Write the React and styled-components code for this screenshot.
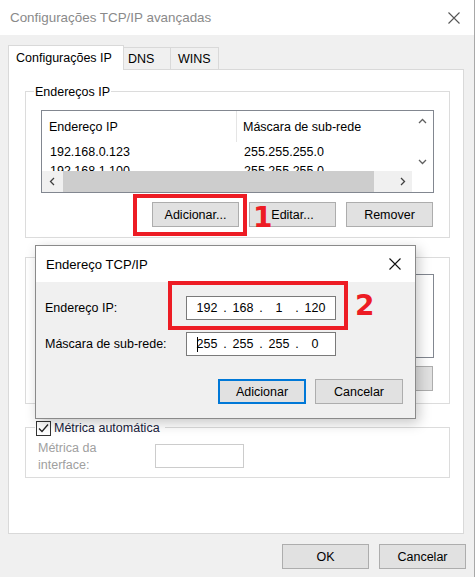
import React from "react";
import styled, { createGlobalStyle } from "styled-components";

const RED = "#ed1c24";

const GlobalStyle = createGlobalStyle`
  html, body {
    margin: 0;
    padding: 0;
    background: #fff;
  }
  body {
    font-family: "Liberation Sans", Arial, sans-serif;
    font-size: 12.5px;
    color: #000;
  }
  * {
    box-sizing: border-box;
  }
`;

const CloseIcon = ({ color }) => (
  <svg width="12" height="12" viewBox="0 0 12 12">
    <path d="M0.5 0.5L11.5 11.5M11.5 0.5L0.5 11.5" stroke={color} strokeWidth="1.1" fill="none" />
  </svg>
);

const Chevron = ({ dir, color = "#404040" }) => {
  const d = {
    up: "M1 6L4.5 2.5L8 6",
    down: "M1 3L4.5 6.5L8 3",
    left: "M6 1L2.5 4.5L6 8",
    right: "M3 1L6.5 4.5L3 8",
  }[dir];
  return (
    <svg width="9" height="9" viewBox="0 0 9 9">
      <path d={d} stroke={color} strokeWidth="1.3" fill="none" />
    </svg>
  );
};

const CheckIcon = () => (
  <svg width="13" height="13" viewBox="0 0 13 13">
    <path d="M2 6.5L5 9.5L11 2.5" stroke="#222" strokeWidth="1.3" fill="none" />
  </svg>
);

const Window = styled.div`
  position: relative;
  width: 475px;
  height: 577px;
  background: #f0f0f0;
  border-right: 1px solid #a8a8a8;
  display: flex;
  flex-direction: column;
`;

const TitleBar = styled.div`
  flex: none;
  height: ${(p) => p.$h}px;
  background: #fff;
  display: flex;
  align-items: center;
  justify-content: space-between;
  padding: 0 14px 0 10px;
  font-size: ${(p) => p.$size}px;
  color: ${(p) => (p.$active ? "#000" : "#8a8a8a")};
`;

const Body = styled.div`
  flex: 1;
  display: flex;
  flex-direction: column;
  padding: 10px 8px 0 8px;
`;

const TabRow = styled.div`
  display: flex;
  align-items: flex-end;
  height: 24px;
  position: relative;
  z-index: 1;
`;

const Tab = styled.div`
  width: ${(p) => p.$w}px;
  height: ${(p) => (p.$active ? 25 : 22)}px;
  margin-bottom: ${(p) => (p.$active ? -1 : 0)}px;
  margin-left: ${(p) => (p.$first ? 0 : -1)}px;
  padding-left: ${(p) => p.$pad}px;
  display: flex;
  align-items: center;
  border: 1px solid #d9d9d9;
  border-bottom: none;
  background: ${(p) => (p.$active ? "#fff" : "#f0f0f0")};
`;

const Panel = styled.div`
  flex: none;
  width: 456px;
  height: 465px;
  background: #fff;
  border: 1px solid #d9d9d9;
  padding: 0 13px 0 16px;
  display: flex;
  flex-direction: column;
`;

const Group = styled.div`
  display: flex;
  flex-direction: column;
  border: 1px solid #dcdcdc;
  margin-top: ${(p) => p.$top}px;
  padding-bottom: ${(p) => p.$bottom}px;
`;

const GroupTitle = styled.div`
  align-self: flex-start;
  display: flex;
  align-items: center;
  gap: 3px;
  height: 16px;
  line-height: 16px;
  margin: -8px 0 0 ${(p) => p.$left ?? 8}px;
  padding: 0 ${(p) => p.$padRight ?? 1}px 0 1px;
  background: #fff;
`;

const CheckBox = styled.span`
  width: 15px;
  height: 15px;
  border: 1px solid #333;
  background: #fff;
  display: flex;
  align-items: center;
  justify-content: center;
`;

const CheckLabel = styled.span`
  color: #18223c;
`;

const ListView = styled.div`
  margin: ${(p) => p.$top}px 15px 0;
  height: ${(p) => p.$h}px;
  border: 1px solid #828790;
  background: #fff;
  display: grid;
  grid-template-columns: 1fr 21px;
  grid-template-rows: 1fr 21px;
  overflow: hidden;
`;

const ListContent = styled.div`
  overflow: hidden;
`;

const ListRow = styled.div`
  display: grid;
  grid-template-columns: 195px 1fr;
  height: ${(p) => p.$h}px;
  align-items: center;
  white-space: nowrap;
`;

const HeaderCell = styled.div`
  height: 100%;
  display: flex;
  align-items: center;
  padding-left: ${(p) => p.$pad}px;
  border-right: ${(p) => (p.$sep ? "1px solid #e5e5e5" : "none")};
`;

const Cell = styled.div`
  padding-left: ${(p) => p.$pad}px;
`;

const VScroll = styled.div`
  background: #fff;
  display: flex;
  flex-direction: column;
  justify-content: space-between;
`;

const ScrollArrow = styled.div`
  flex: none;
  width: ${(p) => p.$w ?? 21}px;
  height: 20px;
  display: flex;
  align-items: center;
  justify-content: center;
`;

const HScroll = styled.div`
  background: #f0f0f0;
  display: flex;
  align-items: stretch;
`;

const Thumb = styled.div`
  width: ${(p) => p.$w}px;
  margin-left: 1px;
  background: #cdcdcd;
`;

const Track = styled.div`
  flex: 1;
`;

const Corner = styled.div`
  background: #fff;
`;

const PlainList = styled.div`
  margin: ${(p) => p.$top}px 15px 0;
  height: ${(p) => p.$h}px;
  border: 1px solid #828790;
  background: #fff;
`;

const ButtonRow = styled.div`
  display: flex;
  justify-content: flex-end;
  gap: ${(p) => p.$gap ?? 10}px;
  margin-top: ${(p) => p.$top}px;
  padding-right: ${(p) => p.$right ?? 0}px;
`;

const Button = styled.button`
  width: ${(p) => p.$w ?? 87}px;
  height: 25px;
  padding: 0;
  background: #e1e1e1;
  border: 1px solid ${(p) => (p.$default ? "#0078d7" : "#adadad")};
  box-shadow: ${(p) => (p.$default ? "inset 0 0 0 1px #0078d7" : "none")};
  font: inherit;
  color: #000;
`;

const MetricRow = styled.div`
  display: flex;
  margin: 4px 0 0 12px;
`;

const MetricLabel = styled.div`
  width: 117px;
  line-height: 17px;
  color: #a0a0a0;
`;

const MetricInput = styled.div`
  width: 89px;
  height: 24px;
  margin-top: 4px;
  border: 1px solid #cccccc;
  background: #fff;
`;

const Dialog = styled.div`
  position: absolute;
  left: 35px;
  top: 245px;
  width: 381px;
  height: 174px;
  border: 1px solid #8a8a8a;
  background: #f0f0f0;
  box-shadow: 3px 4px 12px rgba(0, 0, 0, 0.22);
  display: flex;
  flex-direction: column;
  z-index: 2;
`;

const DialogBody = styled.div`
  display: flex;
  flex-direction: column;
  padding: 14px 12px 14px 9px;
`;

const FieldRow = styled.div`
  display: flex;
  align-items: center;
  height: 24px;
  margin-top: ${(p) => p.$top ?? 0}px;
`;

const FieldLabel = styled.div`
  width: 141px;
`;

const IpInput = styled.div`
  width: 150px;
  height: 24px;
  border: 1px solid #7a7a7a;
  background: #fff;
  display: flex;
  align-items: center;
  padding-left: 7px;
`;

const Octet = styled.span`
  width: 26px;
  display: flex;
  justify-content: center;
  align-items: center;
`;

const Dot = styled.span`
  width: 10px;
  text-align: center;
`;

const Caret = styled.span`
  display: inline-block;
  width: 1px;
  height: 15px;
  background: #000;
  margin-right: -1px;
`;

const Marker = styled.div`
  position: absolute;
  left: ${(p) => p.$x}px;
  top: ${(p) => p.$y}px;
  width: ${(p) => p.$w}px;
  height: ${(p) => p.$h}px;
  border: 4px solid ${RED};
  z-index: 3;
`;

const Num = styled.div`
  position: absolute;
  left: ${(p) => p.$x}px;
  top: ${(p) => p.$y}px;
  font-family: "DejaVu Sans", sans-serif;
  font-weight: bold;
  font-size: 28px;
  line-height: 28px;
  color: ${RED};
  z-index: 3;
`;

const IpField = ({ parts, caret }) => (
  <IpInput>
    {parts.map((part, i) => (
      <React.Fragment key={i}>
        {i > 0 && <Dot>.</Dot>}
        <Octet>
          {caret && i === 0 && <Caret />}
          {part}
        </Octet>
      </React.Fragment>
    ))}
  </IpInput>
);

export default function App() {
  return (
    <>
      <GlobalStyle />
      <Window>
        <TitleBar $h={35} $size={13.4}>
          <span>Configurações TCP/IP avançadas</span>
          <CloseIcon color="#555" />
        </TitleBar>
        <Body>
          <TabRow>
            <Tab $active $first $w={116} $pad={7}>
              Configurações IP
            </Tab>
            <Tab $w={48} $pad={4}>
              DNS
            </Tab>
            <Tab $w={49} $pad={7}>
              WINS
            </Tab>
          </TabRow>
          <Panel>
            <Group $top={21} $bottom={10}>
              <GroupTitle>Endereços IP</GroupTitle>
              <ListView $top={10} $h={83}>
                <ListContent>
                  <ListRow $h={31}>
                    <HeaderCell $pad={7} $sep>
                      Endereço IP
                    </HeaderCell>
                    <HeaderCell $pad={6}>Máscara de sub-rede</HeaderCell>
                  </ListRow>
                  <ListRow $h={19}>
                    <Cell $pad={8}>192.168.0.123</Cell>
                    <Cell $pad={7}>255.255.255.0</Cell>
                  </ListRow>
                  <ListRow $h={19}>
                    <Cell $pad={8}>192.168.1.100</Cell>
                    <Cell $pad={7}>255.255.255.0</Cell>
                  </ListRow>
                </ListContent>
                <VScroll>
                  <ScrollArrow>
                    <Chevron dir="up" color="#606060" />
                  </ScrollArrow>
                  <ScrollArrow>
                    <Chevron dir="down" color="#606060" />
                  </ScrollArrow>
                </VScroll>
                <HScroll>
                  <ScrollArrow $w={20}>
                    <Chevron dir="left" />
                  </ScrollArrow>
                  <Thumb $w={311} />
                  <Track />
                  <ScrollArrow $w={20}>
                    <Chevron dir="right" />
                  </ScrollArrow>
                </HScroll>
                <Corner />
              </ListView>
              <ButtonRow $top={9} $right={16}>
                <Button>Adicionar...</Button>
                <Button>Editar...</Button>
                <Button>Remover</Button>
              </ButtonRow>
            </Group>

            {/* gateway group: almost entirely hidden behind the dialog */}
            <Group $top={19} $bottom={12}>
              <PlainList $top={16} $h={84} />
              <ButtonRow $top={8} $right={16}>
                <Button />
                <Button />
                <Button />
              </ButtonRow>
            </Group>

            <Group $top={23} $bottom={3}>
              <GroupTitle $left={9} $padRight={5}>
                <CheckBox>
                  <CheckIcon />
                </CheckBox>
                <CheckLabel>Métrica automática</CheckLabel>
              </GroupTitle>
              <MetricRow>
                <MetricLabel>
                  Métrica da
                  <br />
                  interface:
                </MetricLabel>
                <MetricInput />
              </MetricRow>
            </Group>
          </Panel>
          <ButtonRow $top={10}>
            <Button>OK</Button>
            <Button>Cancelar</Button>
          </ButtonRow>
        </Body>

        <Dialog>
          <TitleBar $h={36} $size={13.1} $active>
            <span>Endereço TCP/IP</span>
            <CloseIcon color="#111" />
          </TitleBar>
          <DialogBody>
            <FieldRow>
              <FieldLabel>Endereço IP:</FieldLabel>
              <IpField parts={["192", "168", "1", "120"]} />
            </FieldRow>
            <FieldRow $top={12}>
              <FieldLabel>Máscara de sub-rede:</FieldLabel>
              <IpField parts={["255", "255", "255", "0"]} caret />
            </FieldRow>
            <ButtonRow $top={23} $gap={9}>
              <Button $w={88} $default>
                Adicionar
              </Button>
              <Button $w={88}>Cancelar</Button>
            </ButtonRow>
          </DialogBody>
        </Dialog>

        <Marker $x={133} $y={194} $w={114} $h={42} />
        <Num $x={253} $y={204}>
          1
        </Num>
        <Marker $x={168} $y={281} $w={180} $h={49} />
        <Num $x={355} $y={292}>
          2
        </Num>
      </Window>
    </>
  );
}
